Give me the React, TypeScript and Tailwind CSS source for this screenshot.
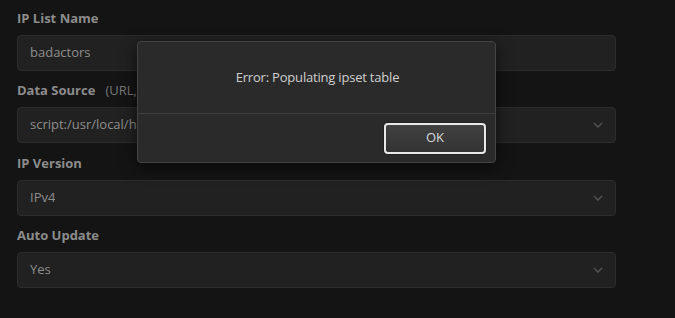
const fields = [
  { label: 'IP List Name', hint: '', value: 'badactors', select: false, gap: 'mb-[10px]' },
  { label: 'Data Source', hint: '(URL, script or file path)', value: 'script:/usr/local/hosts/badactors.sh', select: true, gap: 'mb-[11px]' },
  { label: 'IP Version', hint: '', value: 'IPv4', select: true, gap: 'mb-[10px]' },
  { label: 'Auto Update', hint: '', value: 'Yes', select: true, gap: 'mb-[10px]' },
]

function Chevron() {
  return (
    <svg width="10" height="6" viewBox="0 0 10 6" className="shrink-0">
      <path d="M1 1l4 4 4-4" fill="none" stroke="#555" strokeWidth="1.3" />
    </svg>
  )
}

export default function App() {
  return (
    <div
      className="relative w-[675px] h-[318px] overflow-hidden bg-[#141414] text-[13px]"
      style={{ fontFamily: '"Open Sans", "Noto Sans", sans-serif' }}
    >
      <div className="w-[599px] ml-[17px] pt-[9px]">
        {fields.map(f => (
          <div key={f.label} className={f.gap}>
            <div className="h-[20px] mb-[6px] flex items-center gap-[10px] text-[13px]">
              <span className="font-bold text-[#8c8c8c]">{f.label}</span>
              {f.hint && <span className="text-[#777]">{f.hint}</span>}
            </div>
            <div className="h-[36px] rounded-[4px] border border-[#2c2c2c] bg-[#212121] px-[12px] flex items-center justify-between">
              <span className="text-[#8e8e8e] truncate">{f.value}</span>
              {f.select && <Chevron />}
            </div>
          </div>
        ))}
      </div>

      <div className="absolute left-[137px] top-[41px] w-[359px] h-[122px] rounded-[4px] border border-[#434343] bg-[#2a2a2a] shadow-[0_4px_16px_rgba(0,0,0,0.6)] flex flex-col">
        <div className="h-[71px] flex items-center justify-center text-[#d0d0d0] text-[13px] tracking-[-0.2px] pl-[2px]">
          Error: Populating ipset table
        </div>
        <div className="border-t border-[#3e3e3e] flex-1 flex items-center justify-end pr-[9px]">
          <button className="w-[102px] h-[31px] rounded-[4px] border-2 border-[#e8e8e8] bg-gradient-to-b from-[#414141] to-[#333] text-[#d8d8d8] text-[13px] shadow-[0_0_0_1px_#222]">
            OK
          </button>
        </div>
      </div>
    </div>
  )
}
